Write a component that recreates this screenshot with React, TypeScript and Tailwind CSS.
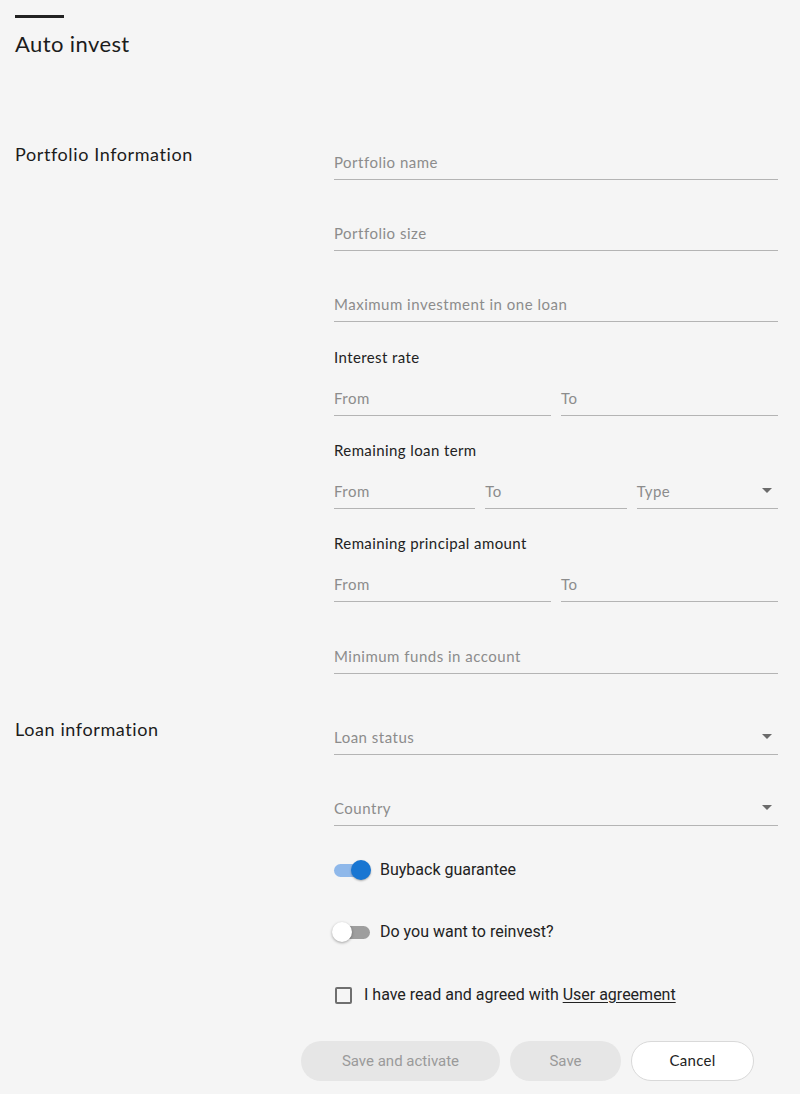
import React from 'react';

const geo = "font-['Lato','Noto_Sans',sans-serif]";
const rob = "font-['Roboto','Liberation_Sans',sans-serif]";

const Caret: React.FC = () => (
  <svg width="10" height="5" viewBox="0 0 10 5" className="shrink-0 mr-[6px]">
    <path d="M0 0 L10 0 L5 5 Z" fill="#6b6b6b" />
  </svg>
);

const Field: React.FC<{ placeholder: string; select?: boolean; className?: string }> = ({ placeholder, select, className = '' }) => (
  <div className={`flex items-center justify-between border-b border-[#b4b4b4] pb-2 h-[29px] ${className}`}>
    <span className="text-[15px] leading-5 text-[#8c8c8c] tracking-[0.5px] translate-y-[1px]">{placeholder}</span>
    {select && <Caret />}
  </div>
);

const Label: React.FC<{ children: React.ReactNode; className?: string }> = ({ children, className = '' }) => (
  <div className={`text-[15px] leading-5 text-[#222] tracking-[0.4px] ${className}`}>{children}</div>
);

const Toggle: React.FC<{ on: boolean; label: string; className?: string }> = ({ on, label, className = '' }) => (
  <div className={`flex items-center h-6 ${className}`}>
    <div className="relative w-[36px] h-5 flex items-center">
      <div className={`w-[34px] h-[13px] rounded-full ${on ? 'bg-[#8fb8ea]' : 'bg-[#9e9e9e] ml-[2px]'}`} />
      <div
        className={`absolute top-0 w-5 h-5 rounded-full ${
          on ? 'left-[17px] bg-[#1976d2] shadow-[0_1px_2px_rgba(0,0,0,0.3)]' : '-left-[2px] bg-white shadow-[0_1px_3px_rgba(0,0,0,0.35)]'
        }`}
      />
    </div>
    <span className={`ml-[10px] text-[16px] text-[#222] ${rob}`}>{label}</span>
  </div>
);

export default function App() {
  return (
    <div className={`min-h-[1094px] bg-[#f5f5f5] ${geo} text-[#1c1c1c]`}>
      <div className="pl-[15px] pr-[22px] pt-[15px]">
        <div className="w-[49px] h-[3px] bg-[#222]" />
        <h1 className="mt-[12px] text-[22px] leading-7 tracking-[0.4px] text-[#1c1c1c]">Auto invest</h1>

        {/* Portfolio information */}
        <div className="mt-[84px] flex">
          <div className="w-[319px] text-[18px] leading-6 tracking-[0.6px]">Portfolio Information</div>
          <div className="flex-1 pt-[9px] flex flex-col">
            <Field placeholder="Portfolio name" />
            <Field placeholder="Portfolio size" className="mt-[42px]" />
            <Field placeholder="Maximum investment in one loan" className="mt-[42px]" />

            <Label className="mt-[25px]">Interest rate</Label>
            <div className="mt-[20px] grid grid-cols-2 gap-[10px]">
              <Field placeholder="From" />
              <Field placeholder="To" />
            </div>

            <Label className="mt-[24px]">Remaining loan term</Label>
            <div className="mt-[20px] grid grid-cols-3 gap-[10px]">
              <Field placeholder="From" />
              <Field placeholder="To" />
              <Field placeholder="Type" select />
            </div>

            <Label className="mt-[24px]">Remaining principal amount</Label>
            <div className="mt-[20px] grid grid-cols-2 gap-[10px]">
              <Field placeholder="From" />
              <Field placeholder="To" />
            </div>

            <Field placeholder="Minimum funds in account" className="mt-[43px]" />
          </div>
        </div>

        {/* Loan information */}
        <div className="mt-[43px] flex">
          <div className="w-[319px] text-[18px] leading-6 tracking-[0.6px]">Loan information</div>
          <div className="flex-1 pt-[9px] flex flex-col">
            <Field placeholder="Loan status" select />
            <Field placeholder="Country" select className="mt-[42px]" />

            <Toggle on label="Buyback guarantee" className="mt-[32px]" />
            <Toggle on={false} label="Do you want to reinvest?" className="mt-[38px]" />

            <div className="mt-[39px] flex items-center h-6">
              <div className="w-[17px] h-[17px] border-2 border-[#6f6f6f] rounded-[2px] ml-[1px]" />
              <span className={`ml-[12px] text-[16px] text-[#222] ${rob}`}>
                I have read and agreed with <span className="underline underline-offset-2">User agreement</span>
              </span>
            </div>
          </div>
        </div>
      </div>

      <div className="mt-[34px] flex justify-end gap-[10px] pr-[46px]">
        <button className={`w-[199px] h-10 rounded-full bg-[#e6e6e6] text-[15px] text-[#9a9a9a] ${rob}`}>Save and activate</button>
        <button className={`w-[111px] h-10 rounded-full bg-[#e6e6e6] text-[15px] text-[#9a9a9a] ${rob}`}>Save</button>
        <button className="w-[123px] h-10 rounded-full bg-white border border-[#d9d9d9] text-[15px] text-[#222] tracking-[0.3px] pb-[2px]">Cancel</button>
      </div>
    </div>
  );
}
